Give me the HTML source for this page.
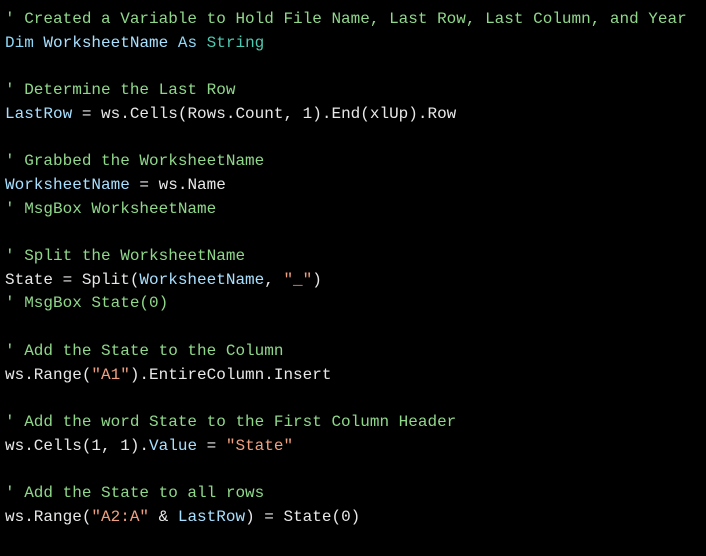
<!DOCTYPE html>
<html><head><meta charset="utf-8"><style>
html,body{margin:0;padding:0;background:#000;width:706px;height:556px;overflow:hidden}
pre{margin:0;position:absolute;left:5px;top:8px;font-family:"Liberation Mono",monospace;font-size:16px;line-height:23.7px;color:#e8e8e8}
.c{color:#8fd88a}.k{color:#8fd8f8}.v{color:#a8e0ff}.t{color:#4ec9b0}.s{color:#f0a080}
</style></head><body><pre><span class="c">' Created a Variable to Hold File Name, Last Row, Last Column, and Year</span>
<span class="k">Dim</span> <span class="v">WorksheetName</span> <span class="k">As</span> <span class="t">String</span>

<span class="c">' Determine the Last Row</span>
<span class="v">LastRow</span> = ws.Cells(Rows.Count, 1).End(xlUp).Row

<span class="c">' Grabbed the WorksheetName</span>
<span class="v">WorksheetName</span> = ws.Name
<span class="c">' MsgBox WorksheetName</span>

<span class="c">' Split the WorksheetName</span>
State = Split(<span class="v">WorksheetName</span>, <span class="s">"_"</span>)
<span class="c">' MsgBox State(0)</span>

<span class="c">' Add the State to the Column</span>
ws.Range(<span class="s">"A1"</span>).EntireColumn.Insert

<span class="c">' Add the word State to the First Column Header</span>
ws.Cells(1, 1).<span class="v">Value</span> = <span class="s">"State"</span>

<span class="c">' Add the State to all rows</span>
ws.Range(<span class="s">"A2:A"</span> &amp; <span class="v">LastRow</span>) = State(0)</pre></body></html>
